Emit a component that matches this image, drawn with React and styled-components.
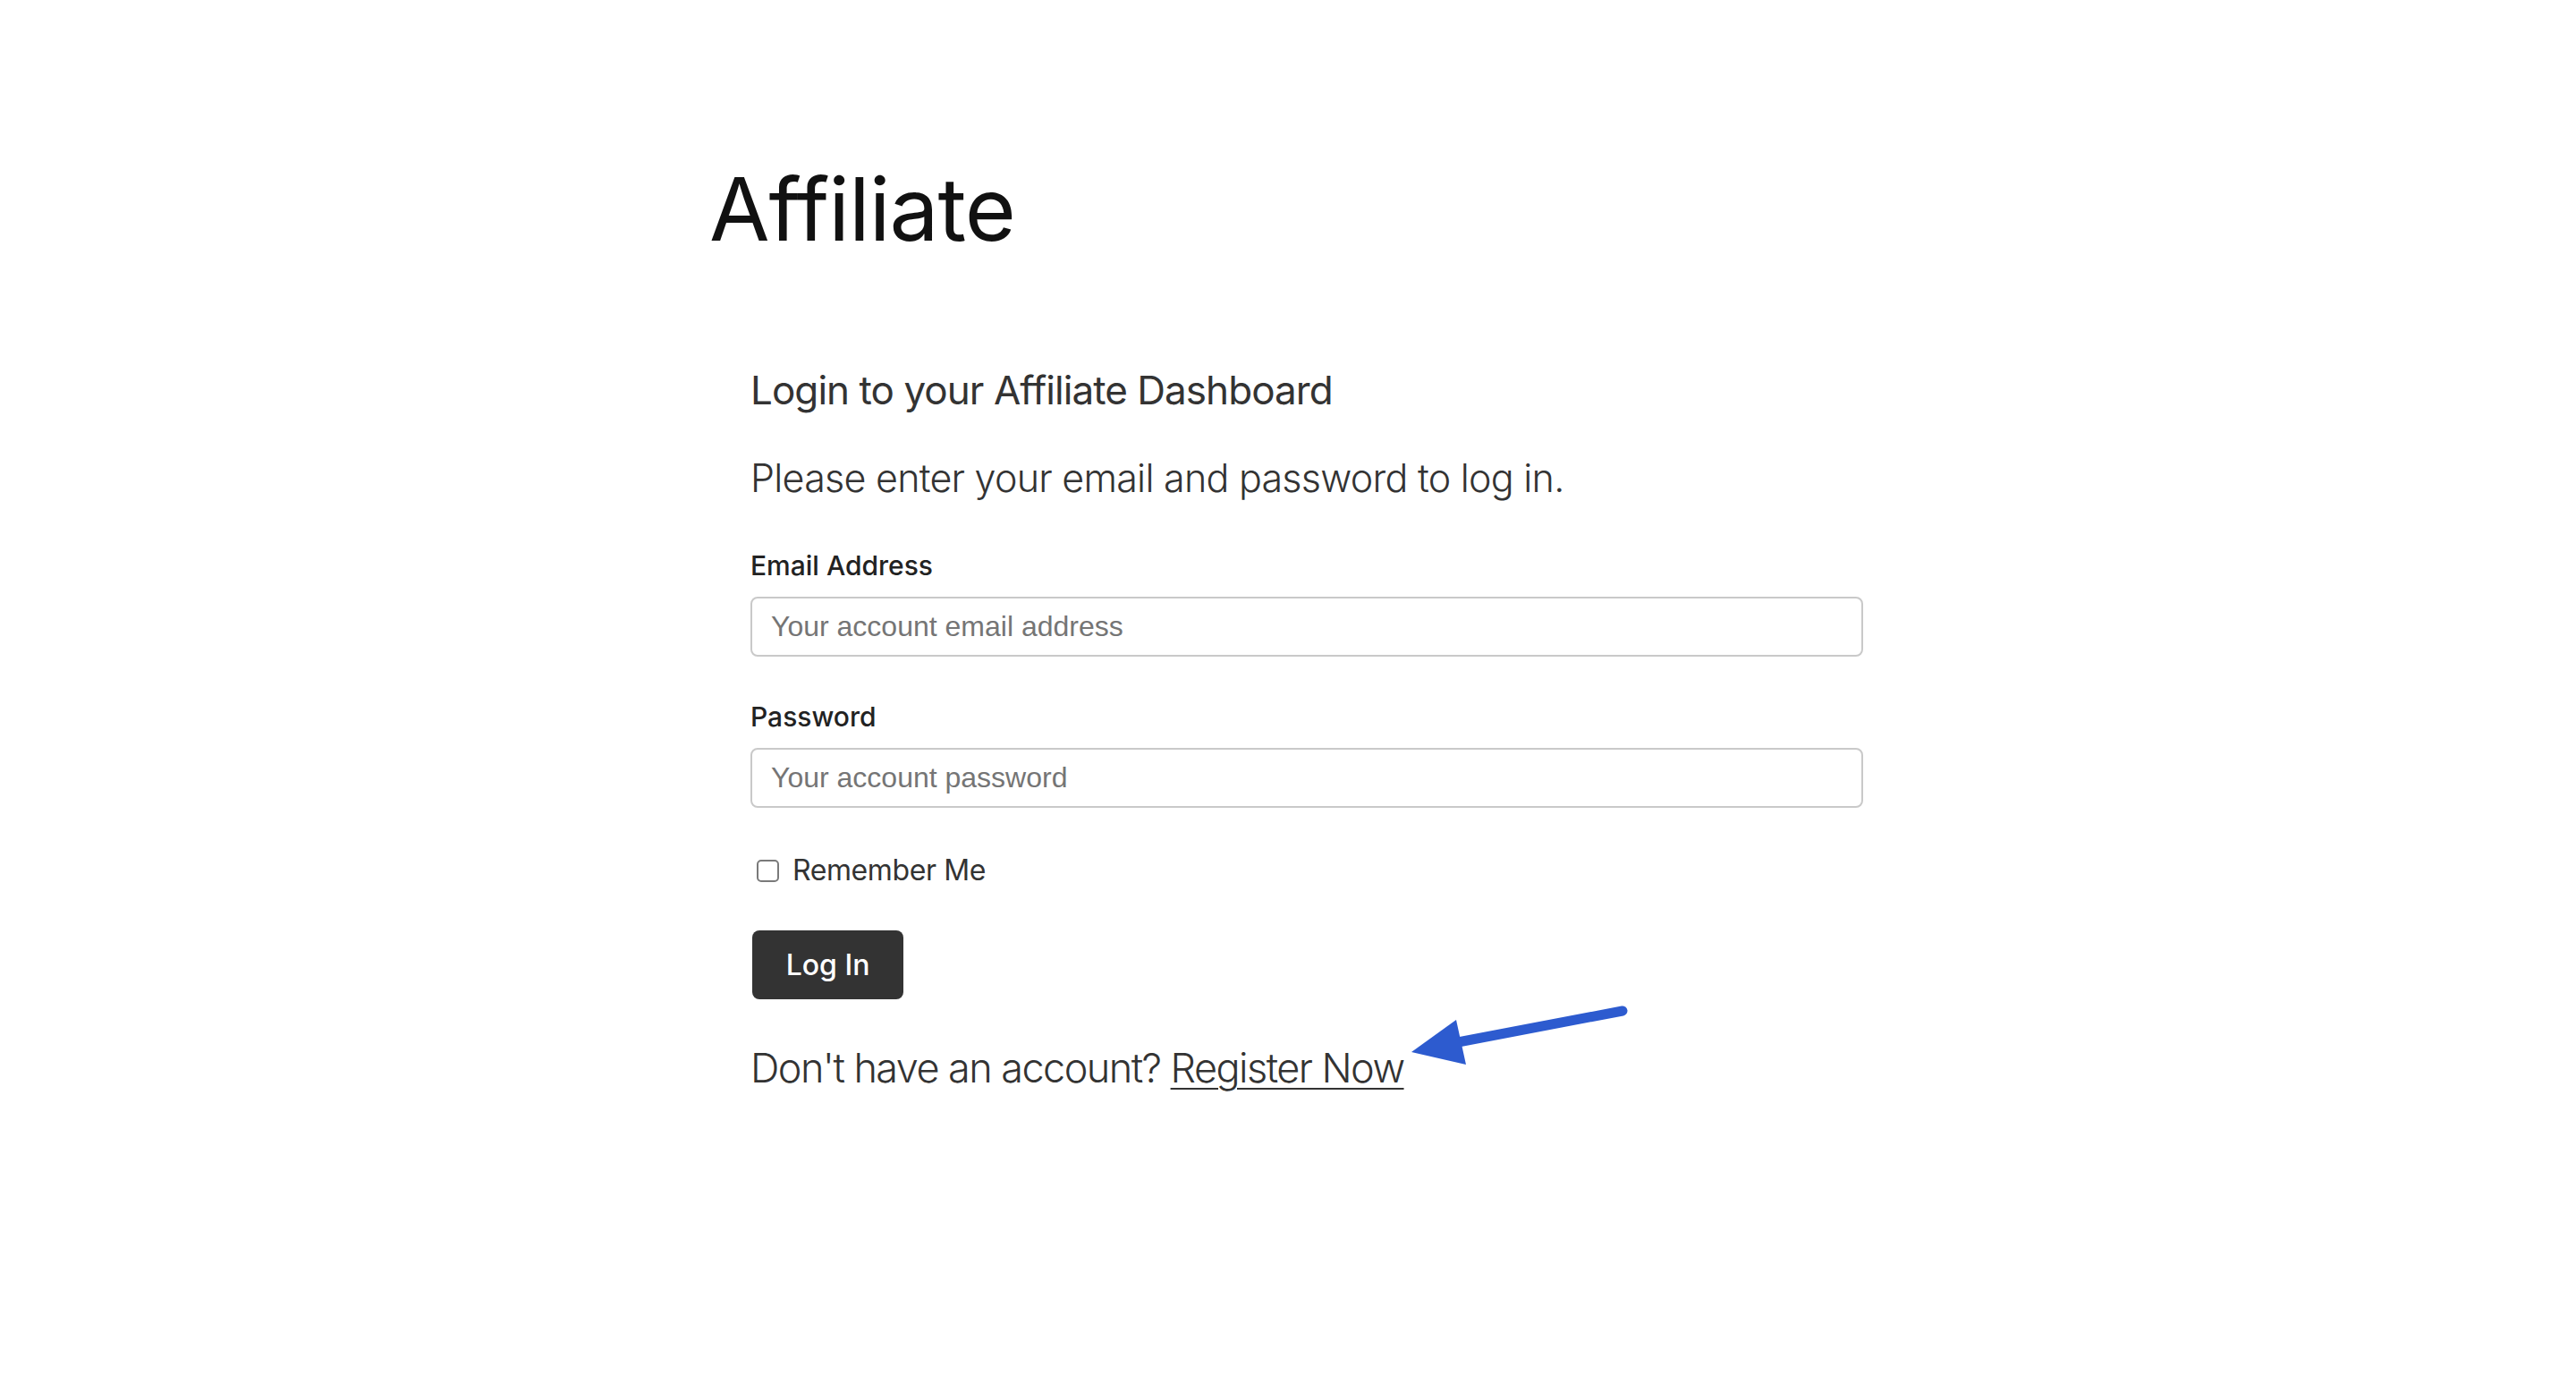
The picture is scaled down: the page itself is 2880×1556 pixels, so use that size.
import React from "react";
import styled, { createGlobalStyle } from "styled-components";

// --- Shared values ---
const FONT_SANS = `Inter, "Noto Sans", "Liberation Sans", sans-serif`;
const FONT_FIELD = `"Liberation Sans", Arial, sans-serif`;

const COLORS = {
  title: "#111111",
  text: "#333333",
  label: "#222222",
  placeholder: "#757575",
  border: "#c9c9c9",
  button: "#333333",
  arrow: "#2d5bcf",
};

const GlobalStyle = createGlobalStyle`
  html, body {
    margin: 0;
    padding: 0;
    background: #ffffff;
  }

  body {
    font-family: ${FONT_SANS};
    color: ${COLORS.text};
  }

  * {
    box-sizing: border-box;
  }
`;

const S = {
  Page: styled.main`
    min-height: 1556px;
    background: #ffffff;
  `,

  Container: styled.div`
    width: 1286px;
    margin: 0 auto;
    padding-top: 175px;
  `,

  Title: styled.h1`
    margin: 0 0 0 -4px;
    font-family: ${FONT_SANS};
    font-size: 98px;
    font-weight: 400;
    line-height: 1.2;
    letter-spacing: -1px;
    color: ${COLORS.title};
  `,

  Panel: styled.section`
    padding-left: 42px;
    margin-top: 117px;
  `,

  Heading: styled.h2`
    margin: 0;
    font-size: 44px;
    font-weight: 400;
    line-height: 1.2;
    letter-spacing: -0.95px;
    color: ${COLORS.text};
  `,

  Intro: styled.p`
    margin: 47px 0 0;
    font-size: 43px;
    font-weight: 300;
    line-height: 1.2;
    letter-spacing: -0.75px;
    color: ${COLORS.text};
  `,

  Form: styled.form`
    display: flex;
    flex-direction: column;
    margin-top: 53px;
  `,

  Field: styled.div`
    display: flex;
    flex-direction: column;
    gap: 17px;
    margin-bottom: ${({ $spacing }) => $spacing}px;
  `,

  Label: styled.label`
    font-size: 30px;
    font-weight: 500;
    line-height: 1.2;
    color: ${COLORS.label};
  `,

  Input: styled.input`
    width: 100%;
    height: 67px;
    padding: 0 21px;
    border: 2px solid ${COLORS.border};
    border-radius: 8px;
    background: #ffffff;
    font-family: ${FONT_FIELD};
    font-size: 32px;
    color: ${COLORS.text};
    outline: none;

    &::placeholder {
      color: ${COLORS.placeholder};
    }
  `,

  RememberRow: styled.label`
    display: flex;
    align-items: center;
    gap: 15px;
    padding-left: 7px;
    margin-top: 51px;
    font-size: 32px;
    font-weight: 400;
    line-height: 1.2;
    letter-spacing: -0.4px;
    color: ${COLORS.text};
  `,

  Checkbox: styled.span`
    display: inline-block;
    width: 25px;
    height: 25px;
    border: 2px solid #7a7a7a;
    border-radius: 5px;
    background: #ffffff;
  `,

  SubmitButton: styled.button`
    align-self: flex-start;
    width: 169px;
    height: 77px;
    margin-top: 48px;
    margin-left: 2px;
    border: none;
    border-radius: 8px;
    background: ${COLORS.button};
    color: #ffffff;
    font-family: ${FONT_SANS};
    font-size: 32px;
    font-weight: 500;
    cursor: pointer;
  `,

  RegisterLine: styled.p`
    position: relative;
    margin: 50px 0 0;
    font-size: 45px;
    font-weight: 300;
    line-height: 1.2;
    letter-spacing: -1.55px;
    color: ${COLORS.text};
  `,

  RegisterLink: styled.a`
    color: ${COLORS.text};
    text-decoration: underline;
    text-decoration-thickness: 2px;
    text-underline-offset: 6px;
  `,

  // annotation arrow drawn over the page
  Arrow: styled.svg`
    position: absolute;
    left: 731px;
    top: -48px;
    overflow: visible;
  `,
};

function PointerArrow() {
  return (
    <S.Arrow width="255" height="80" viewBox="0 0 255 80">
      <line
        x1="60"
        y1="46"
        x2="244"
        y2="11"
        stroke={COLORS.arrow}
        strokeWidth="11"
        strokeLinecap="round"
      />
      <polygon points="8,57 58,21 69,71" fill={COLORS.arrow} />
    </S.Arrow>
  );
}

export default function App() {
  return (
    <>
      <GlobalStyle />
      <S.Page>
        <S.Container>
          <S.Title>Affiliate</S.Title>

          <S.Panel>
            <S.Heading>Login to your Affiliate Dashboard</S.Heading>
            <S.Intro>Please enter your email and password to log in.</S.Intro>

            <S.Form onSubmit={(e) => e.preventDefault()}>
              <S.Field $spacing={49}>
                <S.Label htmlFor="affiliate-email">Email Address</S.Label>
                <S.Input
                  id="affiliate-email"
                  type="email"
                  placeholder="Your account email address"
                />
              </S.Field>

              <S.Field $spacing={0}>
                <S.Label htmlFor="affiliate-password">Password</S.Label>
                <S.Input
                  id="affiliate-password"
                  type="password"
                  placeholder="Your account password"
                />
              </S.Field>

              <S.RememberRow>
                <S.Checkbox />
                Remember Me
              </S.RememberRow>

              <S.SubmitButton type="submit">Log In</S.SubmitButton>
            </S.Form>

            <S.RegisterLine>
              Don't have an account?{" "}
              <S.RegisterLink href="#register">Register Now</S.RegisterLink>
              <PointerArrow />
            </S.RegisterLine>
          </S.Panel>
        </S.Container>
      </S.Page>
    </>
  );
}
